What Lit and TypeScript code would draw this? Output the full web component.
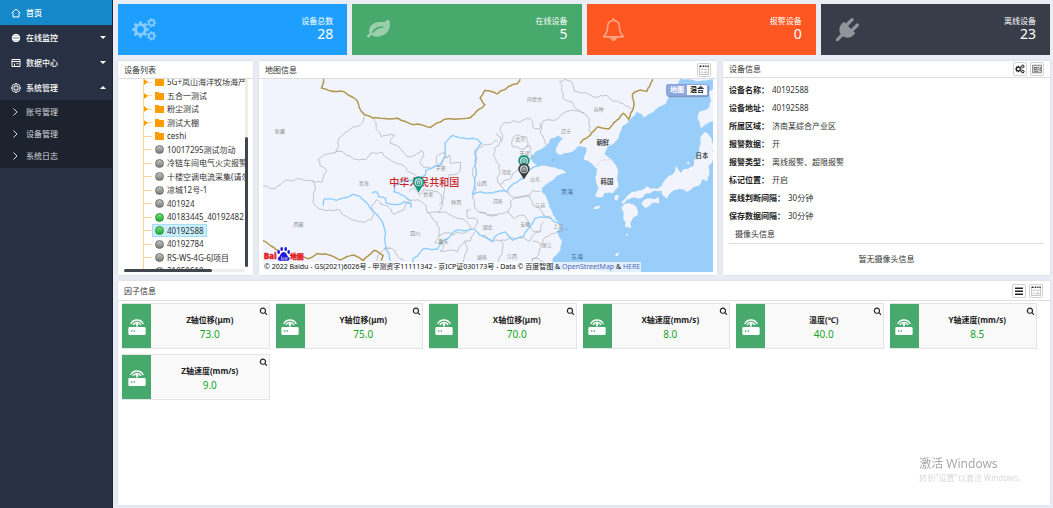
import { LitElement, html, svg, css, nothing } from "lit";
import { customElement } from "lit/decorators.js";
import { classMap } from "lit/directives/class-map.js";

/* ---------- icon helpers ---------- */

const gear = (cx: number, cy: number, r: number, hole: number, teeth = 8): string => {
  const inner = r * 0.76;
  const step = (Math.PI * 2) / teeth;
  const pt = (rad: number, a: number) =>
    `${(cx + rad * Math.cos(a)).toFixed(2)} ${(cy + rad * Math.sin(a)).toFixed(2)}`;
  let d = "";
  for (let i = 0; i < teeth; i++) {
    const a = i * step;
    d += `${i ? "L" : "M"}${pt(inner, a - step * 0.3)}L${pt(r, a - step * 0.2)}L${pt(r, a + step * 0.2)}L${pt(inner, a + step * 0.3)}`;
  }
  return `${d}ZM${cx + hole} ${cy}A${hole} ${hole} 0 1 0 ${cx - hole} ${cy}A${hole} ${hole} 0 1 0 ${cx + hole} ${cy}Z`;
};

const cogs = svg`<svg class="ico" viewBox="0 0 74 68" aria-hidden="true"><path fill-rule="evenodd" d="${
  gear(25, 34, 25, 10) + gear(58, 14, 14, 5.5, 7) + gear(58, 53, 14, 5.5, 7)
}"/></svg>`;

const fa = (d: string) =>
  svg`<svg class="ico" viewBox="0 0 1792 1792" aria-hidden="true"><path d=${d} /></svg>`;

const leaf = fa(
  "M1280 704q0-26-19-45t-45-19q-172 0-318 49.5t-259.5 134-235.5 219.5q-19 21-19 45 0 26 19 45t45 19q24 0 45-19 27-24 74-71t67-66q137-124 268.5-176t313.5-52q26 0 45-19t19-45zm512-198q0 95-20 193-46 224-184.5 383t-357.5 268q-214 108-438 108-148 0-286-47-15-5-88-42t-96-37q-16 0-39.5 32t-45 70-52.5 70-60 32q-43 0-63.5-17.5t-45.5-59.5q-2-4-6-11t-5.5-10-3-9.5-1.5-13.5q0-35 31-73.5t68-65.5 68-56 31-48q0-4-14-38t-16-44q-9-51-9-104 0-115 43.5-220t119-184.5 170.5-139 204-95.5q55-18 145-25.5t179.5-9 178.5-6 163.5-24 113.5-56.5l29.5-29.5 29.5-28 27-20 36.5-16 43.5-4.5q39 0 70.5 46t47.5 112 24 124 8 96z"
);
const bell = fa(
  "M912 1696q0-16-16-16-59 0-101.5-42.5t-42.5-101.5q0-16-16-16t-16 16q0 73 51.5 124.5t124.5 51.5q16 0 16-16zm-666-288h1300q-266-300-266-832 0-51-24-105t-69-103-121.5-80.5-169.5-31.5-169.5 31.5-121.5 80.5-69 103-24 105q0 532-266 832zm1482 0q0 52-38 90t-90 38h-448q0 106-75 181t-181 75-181-75-75-181h-448q-52 0-90-38t-38-90q50-42 91-88t85-119.5 74.5-158.5 50-206 19.5-260q0-152 117-282.5t307-158.5q-8-19-8-39 0-40 28-68t68-28 68 28 28 68q0 20-8 39 190 28 307 158.5t117 282.5q0 139 19.5 260t50 206 74.5 158.5 85 119.5 91 88z"
);
const plug = fa(
  "M1755 453q37 38 37 90.5t-37 90.5l-401 400 150 150-160 160q-163 163-389.5 186.5t-411.5-100.5l-362 362h-181v-181l362-362q-124-185-100.5-411.5t186.5-389.5l160-160 150 150 400-401q38-37 91-37t90 37 37 90.5-37 90.5l-400 401 234 234 401-400q38-37 91-37t90 37z"
);
const search = fa(
  "M1216 832q0-185-131.5-316.5t-316.5-131.5-316.5 131.5-131.5 316.5 131.5 316.5 316.5 131.5 316.5-131.5 131.5-316.5zm512 832q0 52-38 90t-90 38q-54 0-90-38l-343-342q-179 124-399 124-143 0-273.5-55.5t-225-150-150-225-55.5-273.5 55.5-273.5 150-225 225-150 273.5-55.5 273.5 55.5 225 150 150 225 55.5 273.5q0 220-124 399l343 343q37 37 37 90z"
);

const home = svg`<svg class="ico line" viewBox="0 0 20 20" aria-hidden="true"><path d="M1.5 10L10 2l8.500 8M4 9v9h12V9"/></svg>`;
const globe = svg`<svg class="ico line" viewBox="0 0 20 20" aria-hidden="true"><circle cx="10" cy="10" r="7.500" fill="currentColor" fill-opacity=".35"/><ellipse cx="10" cy="10" rx="4" ry="7.500"/><path d="M3 7h14M3 13h14M10 2v16"/></svg>`;
const windowIcon = svg`<svg class="ico line" viewBox="0 0 20 20" aria-hidden="true"><path d="M2 3h16v14H2zM2 7h16M7 11v6M11 11.500h4"/></svg>`;
const setting = svg`<svg class="ico line" viewBox="0 0 20 20" aria-hidden="true"><path d=${gear(10, 10, 9, 4)} /></svg>`;
const bars = svg`<svg class="ico" viewBox="0 0 20 20" aria-hidden="true"><path d="M2 3h16v3H2zM2 9h16v3H2zM2 15h16v3H2z"/></svg>`;
const calendar = svg`<svg class="ico" viewBox="0 0 32 32" aria-hidden="true"><path d="M2 4v26h28V4" fill="none" stroke="#999" stroke-width="2"/><path d="M2 4h6M12 4h5M20 4h4M27 4h4" stroke="#222" stroke-width="5"/><path d="M6 13l3 3 5-6M17 14h9M7 23h5M15 23h12" fill="none" stroke="#888" stroke-width="2"/></svg>`;
const card = svg`<svg class="ico" viewBox="0 0 32 32" aria-hidden="true"><path d="M2 4h28v24H2z" fill="#eee" stroke="#777" stroke-width="3"/><path d="M7 11h7v7H7zM17 11h5M26 10v13M6 23h15M17 17h5" fill="none" stroke="#555" stroke-width="3"/></svg>`;
const router = svg`<svg class="ico" viewBox="0 0 52 54" aria-hidden="true"><g fill="none" stroke="currentColor" stroke-width="4"><path d="M7 21a21 21 0 0 1 38 0M14 24a13 13 0 0 1 24 0"/><path d="M26 22v10" stroke-width="3"/></g><circle cx="26" cy="22" r="4"/><path fill-rule="evenodd" d="M4 30h44q4 0 4 4v16q0 4-4 4H4q-4 0-4-4V34q0-4 4-4zM8 40v4h4v-4zM16 40v4h4v-4z"/></svg>`;

/* ---------- map drawing ---------- */

type Pt = [number, number];

/* Breaks a polyline into short wobbling segments so it reads as a natural border. */
const rough = (coords: string, amp = 0.16, closed = false): string => {
  let seed = coords.length * 7 + 13;
  const rnd = () => {
    seed = (seed * 16807) % 2147483647;
    return seed / 2147483647 - 0.5;
  };
  let pts: Pt[] = coords.split(" ").map((p) => p.split(",").map(Number) as Pt);
  if (closed) pts.push(pts[0]);
  for (let k = 0; k < 3; k++) {
    const next: Pt[] = [pts[0]];
    for (let i = 1; i < pts.length; i++) {
      const [ax, ay] = pts[i - 1];
      const [bx, by] = pts[i];
      const len = Math.hypot(bx - ax, by - ay);
      if (len > 9) {
        const o = rnd() * 2 * amp;
        next.push([(ax + bx) / 2 - (by - ay) * o, (ay + by) / 2 + (bx - ax) * o]);
      }
      next.push([bx, by]);
    }
    pts = next;
  }
  return "M" + pts.map((p) => `${p[0].toFixed(1)} ${p[1].toFixed(1)}`).join("L") + (closed ? "Z" : "");
};

const provincesWest = [
  "15,382 40,390 70,380 85,366 120,362 165,366 175,372 195,372 208,335 190,322 183,303 232,284 242,250 275,218 310,200 322,176",
  "344,176 356,212 372,236 412,230 400,256 430,272 450,295 492,276 500,290 488,312 500,328 520,330",
  "232,284 262,284 290,302 325,304 340,285 378,285 400,305 440,322 452,340 476,352",
  "166,368 172,400 168,430 182,448 210,456 250,456 275,478 322,492 345,480 352,462",
  "352,462 346,438 358,424 390,442 410,468 440,454 452,430 480,424 505,440 510,462 545,462",
  "455,400 470,390 486,410 500,392 540,400 556,430 540,462",
  "520,330 545,326 560,300 575,290 580,316 610,312 602,345 575,350 560,380 560,420 545,440",
  "545,462 580,470 600,480 630,492 640,512",
  "655,290 645,330 652,370 645,412 650,440 664,460 690,470 720,470",
  "640,512 600,520 590,530 545,530 532,552 560,560 548,578 600,580 622,548 640,546 650,520",
  "400,568 420,590 440,606",
  "622,548 620,600 628,640",
  "640,452 628,455 632,480 660,484 650,510",
  "545,326 538,295 560,282 570,300",
  "655,290 680,258 720,248",
  "360,606 372,580 400,568 380,570",
  "510,462 545,530",
];
const provincesEast = [
  "50,225 65,250 62,210 72,195 100,188 120,192 145,180 158,188 160,208 180,212 188,190 215,186 240,175 265,160 300,158 312,165",
  "312,165 330,205 332,230",
  "240,70 245,95 250,120 275,130 285,148 312,165",
  "240,70 270,68 285,100 320,105 345,118 380,112 400,130 445,145 455,152",
  "100,240 118,230 140,236 146,255 134,272 118,270 98,265 102,240",
  "134,272 150,262 152,285 164,300",
  "180,195 182,225 195,245 200,262",
  "62,250 45,270 50,310 60,320 52,360 62,380 80,400",
  "62,380 90,362 100,345 120,330 158,300",
  "80,400 92,412 150,410 160,395 182,400",
  "92,430 85,460 105,480 130,470 148,500 162,520 182,520",
  "92,430 115,418 150,412 160,440 180,450 190,470 215,478",
  "0,462 30,472 70,465 85,460",
  "105,540 150,548 160,530 182,520 190,490",
  "60,640 58,600 70,570 65,545 105,540",
  "160,548 185,560 175,590 158,600 160,640",
  "185,560 215,525 235,520",
  "0,530 35,548 65,545",
  "158,600 190,610 210,625",
];
const riversWest = [
  "200,442 202,422 240,426 265,418 285,408 310,416 335,440 355,464 378,496 384,520 386,570 400,606",
  "345,404 358,400 365,415 385,418 388,434 425,438 442,430 462,435 460,448",
  "412,382 410,400 440,412 462,428",
  "412,382 455,366 480,362 504,350 505,336 550,318 565,290 562,255 586,232 630,242 660,243 672,255 652,282 655,330 652,370 645,410",
  "645,410 668,400 706,404",
  "490,580 500,570 540,572 570,540 600,514 650,512 668,530 706,550",
  "490,580 468,600 470,640",
];
const riversEast = [
  "40,404 82,400 92,385 130,360 140,345 178,322",
  "40,550 52,530 75,520 100,545 130,535 165,480 200,476 225,490 250,497",
];
const goldWest = [
  "200,63 194,90 215,97 260,100 300,128 322,170 420,180 520,208 560,184 640,178 682,140 668,120 682,97 720,108",
  "15,545 40,560 75,582 110,590 155,600 180,585 225,592 250,604 292,590 320,605 352,575 378,590 372,606",
];
const goldEast = [
  "54,108 80,92 98,80 112,78 122,64",
  "300,255 322,238 355,206 388,212 400,196 430,166 446,184 460,150 458,108 482,96 500,100 518,64",
];
const sea =
  "600,63 570,98 556,138 520,162 492,178 470,160 450,184 426,206 416,240 388,262 374,288 398,308 414,345 416,385 400,404 374,404 368,416 345,414 356,388 346,358 350,330 330,312 312,304 320,280 318,266 295,264 265,284 240,290 228,280 250,240 236,232 214,240 200,262 165,284 150,298 160,312 176,326 200,322 248,334 260,344 232,352 215,368 190,385 186,400 206,432 215,455 235,490 246,502 232,520 246,545 242,575 220,598 206,640 703,640 703,63";
const islands = [
  "703,84 686,100 692,130 682,152 658,160 652,182 664,210 680,198 703,186 714,140",
  "672,222 690,236 703,262 700,300 684,326 682,368 668,362 656,382 640,386 622,400 598,392 578,398 560,422 544,396 520,398 496,406 480,420 456,418 430,436 424,432 456,400 476,396 500,384 545,384 576,350 590,322 600,344 640,322 656,290 660,240",
  "484,438 506,420 534,416 538,434 514,436 494,448",
  "424,446 448,434 470,446 474,468 452,490 454,508 436,506 430,480 432,466",
  "342,448 358,442 360,448 344,452",
  "404,414 416,410 412,426 404,424",
  "620,316 626,308 628,318",
  "404,592 420,580 414,592",
  "438,526 446,528 440,532",
];

const label = (t: string, x: number, y: number, cls = "prov") =>
  svg`<text class=${cls} x=${x} y=${y}>${t}</text>`;

const pin = (x: number, y: number, color: string) => svg`
  <g transform="translate(${x} ${y})">
    <path d="M0 30L-12 11A17 17 0 1 1 12 11Z" fill=${color} />
    <circle r="12" fill="#d5dfe0" fill-opacity=".9" />
    <path d="M-6 7V-3L0-8L6-3V7ZM0-2V5" fill="none" stroke=${color} stroke-width="2.500" />
  </g>`;

const mapDrawing = svg`
<svg class="canvas" viewBox="15 63 1353 577" preserveAspectRatio="xMidYMid slice" role="img" aria-label="地图">
  <rect x="0" y="0" width="1400" height="700" fill="#f1f4fc" />
  <g transform="translate(666 0)">
    <path d=${rough(sea, 0.1, true)} fill="#9acefa" />
    ${islands.map((p) => svg`<path d=${rough(p, 0.16, true)} fill="#f1f4fc" />`)}
    <g class="border">${provincesEast.map((p) => svg`<path d=${rough(p)} />`)}</g>
    <g class="river">${riversEast.map((p) => svg`<path d=${rough(p, 0.1)} />`)}</g>
    <g class="gold">${goldEast.map((p) => svg`<path d=${rough(p, 0.1)} />`)}</g>
    <path d="M350 322L365 306L392 304" fill="none" stroke="#e8b0a8" stroke-width="2" stroke-dasharray="6 4" />
    <path d="M216 306L226 303M232 520L266 511" stroke="#8a97a8" stroke-width="1.500" />
  </g>
  <g class="border">${provincesWest.map((p) => svg`<path d=${rough(p)} />`)}</g>
  <g class="river">${riversWest.map((p) => svg`<path d=${rough(p, 0.1)} />`)}</g>
  <g class="gold">${goldWest.map((p) => svg`<path d=${rough(p, 0.08)} />`)}</g>
  ${label("新疆", 54, 225)}${label("青海", 305, 380)}${label("西藏", 110, 503)}
  ${label("四川", 459, 530)}${label("甘肃", 497, 412)}${label("宁夏", 535, 335)}
  ${label("陕西", 582, 438)}${label("山西", 658, 380)}${label("湖北", 675, 510)}
  ${label("重庆", 543, 553)}${label("湖南", 658, 602)}${label("内蒙古", 808, 128)}
  ${label("吉林", 1007, 159)}${label("辽宁", 910, 225)}${label("北京", 773, 248)}
  ${label("天津", 786, 290)}${label("河北", 731, 346)}${label("山东", 818, 368)}
  ${label("河南", 705, 435)}${label("江苏", 833, 445)}${label("安徽", 788, 501)}
  ${label("上海", 886, 509)}${label("浙江", 852, 566)}${label("江西", 748, 599)}
  ${label("黄海", 910, 407, "ocean")}${label("东海", 940, 600, "ocean")}
  ${label("朝鲜", 1016, 259, "nation")}${label("韩国", 1028, 377, "nation")}${label("日本", 1312, 298, "nation")}
  ${label("中华人民共和国", 396, 382, "china")}
  ${pin(484, 372, "#0f9580")}${pin(799, 308, "#0f9580")}${pin(799, 333, "#3c3c3f")}
</svg>`;

const baiduLogo = svg`
<svg class="baidu" viewBox="0 0 126 48" aria-label="百度地图">
  <g class="logo-text"><text x="2" y="38" font-size="24">Bai</text><text x="82" y="38" font-size="20">地图</text></g>
  <g stroke="#fff" stroke-width="8"><circle cx="62" cy="28" r="14" fill="#fff"/></g>
  <g fill="#2319dc">
    <path d="M62 18q7 0 10 8t7 9q3 10-8 9h-18q-11 1-8-9 4-2 7-9t10-8z"/>
    <ellipse cx="47" cy="18" rx="4" ry="6"/><ellipse cx="56" cy="9" rx="4" ry="6"/>
    <ellipse cx="68" cy="9" rx="4" ry="6"/><ellipse cx="77" cy="18" rx="4" ry="6"/>
  </g>
  <path d="M56 31v9h5v-5M66 33v7h6v-7" fill="none" stroke="#fff" stroke-width="2"/>
</svg>`;

/* ---------- data ---------- */

const menu = [
  { text: "首页", icon: home, active: true, arrow: "" },
  { text: "在线监控", icon: globe, active: false, arrow: "down" },
  { text: "数据中心", icon: windowIcon, active: false, arrow: "down" },
  { text: "系统管理", icon: setting, active: false, arrow: "up" },
];
const subMenu = ["账号管理", "设备管理", "系统日志"];
const stats = [
  { name: "设备总数", value: 28, icon: cogs, tone: "blue" },
  { name: "在线设备", value: 5, icon: leaf, tone: "green" },
  { name: "报警设备", value: 0, icon: bell, tone: "orange" },
  { name: "离线设备", value: 23, icon: plug, tone: "dark" },
];
const tree = [
  { text: "5G+岚山海洋牧场海产", kind: "folder", open: true },
  { text: "五合一测试", kind: "folder", open: true },
  { text: "粉尘测试", kind: "folder", open: true },
  { text: "测试大棚", kind: "folder", open: true },
  { text: "ceshi", kind: "folder" },
  { text: "10017295测试勿动", kind: "off" },
  { text: "冷链车间电气火灾报警", kind: "off" },
  { text: "十楼空调电流采集(请勿", kind: "off" },
  { text: "凉城12号-1", kind: "off" },
  { text: "401924", kind: "off" },
  { text: "40183445_40192482", kind: "on" },
  { text: "40192588", kind: "on", selected: true },
  { text: "40192784", kind: "off" },
  { text: "RS-WS-4G-6J项目", kind: "off" },
  { text: "21050610", kind: "off" },
];
const details = [
  ["设备名称：", "40192588"],
  ["设备地址：", "40192588"],
  ["所属区域：", "济南某综合产业区"],
  ["报警数据：", "开"],
  ["报警类型：", "离线报警、超限报警"],
  ["标记位置：", "开启"],
  ["离线判断间隔：", "30分钟"],
  ["保存数据间隔：", "30分钟"],
];
const factors = [
  ["Z轴位移(μm)", "73.0"],
  ["Y轴位移(μm)", "75.0"],
  ["X轴位移(μm)", "70.0"],
  ["X轴速度(mm/s)", "8.0"],
  ["温度(℃)", "40.0"],
  ["Y轴速度(mm/s)", "8.5"],
  ["Z轴速度(mm/s)", "9.0"],
];

@customElement("app-root")
export class AppRoot extends LitElement {
  static styles = css`
    :host {
      display: grid;
      grid-template-columns: 113px minmax(0, 1fr);
      min-height: 100vh;
      background: #ebedf5;
      color: #333;
      font: 8px/12px "Noto Sans", "Noto Sans CJK SC", sans-serif;
    }
    * { box-sizing: border-box; }
    ul, dl, dd, h2, h3, p { margin: 0; padding: 0; list-style: none; font-size: inherit; font-weight: inherit; }
    a { color: inherit; text-decoration: none; }
    button { margin: 0; padding: 0; font: inherit; color: inherit; cursor: pointer; border: 0; background: none; }
    .ico { display: block; fill: currentColor; }
    .line { fill: none; stroke: currentColor; stroke-width: 2; }

    .side { background: #283043; border-right: 1px solid #1b2236; color: #fff; }
    .item { display: flex; align-items: center; gap: 5px; height: 25px; padding: 0 6px 0 11px; font-weight: 500; }
    .item .ico { width: 10px; height: 10px; }
    .item.active { background: #1689ca; }
    .item .arrow { margin-left: auto; border: 3px solid transparent; border-bottom: 0; border-top-color: #fff; }
    .item .arrow.up { border: 3px solid transparent; border-top: 0; border-bottom-color: #fff; }
    .sub { padding: 1px 0; background: #1d222f; color: #d5d7dc; }
    .sub a { display: flex; align-items: center; gap: 8px; height: 22px; padding: 0 0 0 13px; }
    .sub svg { width: 5px; height: 8px; }

    .main { display: flex; flex-direction: column; gap: 6px; padding: 4px 3px 3px 5px; min-width: 0; }
    .stats { display: grid; grid-template-columns: repeat(4, minmax(0, 1fr)); gap: 5px; }
    .stat { display: flex; align-items: center; justify-content: space-between; height: 51px; padding: 0 14px; color: #fff; }
    .stat .ico { width: 25px; height: 23px; opacity: .45; }
    .stat .nums { padding-bottom: 4px; text-align: right; }
    .stat .num { display: block; font-size: 14px; line-height: 14px; }
    .blue { background: #1e9fff; }
    .green { background: #47a96c; }
    .orange { background: #ff5722; }
    .dark { background: #393d49; }

    .row { display: grid; grid-template-columns: 135fr 458fr 327fr; grid-template-rows: minmax(0, 1fr); gap: 6px; height: 214px; }
    .panel { display: flex; flex-direction: column; background: #fff; min-width: 0; box-shadow: 0 0 3px #d3d5de; }
    .head { display: flex; align-items: center; flex: none; height: 18px; padding: 0 6px; border-bottom: 1px solid #ddd; }
    .head h2 { flex: 1; }
    .tool { display: grid; place-items: center; width: 14px; height: 14px; border: 1px solid #d2d2d2; border-radius: 2px; background: #fff; color: #222; margin-left: 3px; }
    .tool .ico { width: 10px; height: 10px; }

    .tree { position: relative; flex: 1; min-height: 0; overflow: hidden; margin: 0 5px 3px 6px; }
    .tree ul { margin: -4px 3px 0 19px; border-left: 1px solid #ffd591; }
    .tree li { display: flex; align-items: center; height: 14px; white-space: nowrap; }
    .tree li:nth-child(even) { height: 13px; }
    .tick { flex: none; width: 8px; height: 1px; background: #ffd591; }
    .tick.open { height: 6px; background: linear-gradient(#ffd591, #ffd591) 0 50% / 100% 1px no-repeat; }
    .tick.open::before { content: ""; display: block; width: 0; border: 3px solid transparent; border-left: 4px solid #ff9c00; border-right: 0; }
    .node { display: flex; align-items: center; gap: 3px; height: 13px; padding: 0 2px; border: 1px solid transparent; }
    .node.selected { background: #c8efff; border-color: #a5ddf2; }
    .mark { width: 9px; height: 9px; border-radius: 50%; border: 1px solid #6e6e6e; background: linear-gradient(#c4c4c4, #7c7c7c); }
    .mark.on { border-color: #2a8f35; background: linear-gradient(#76e07d, #1fae30); }
    .mark.folder { height: 8px; border: 0; border-radius: 0; background: linear-gradient(#fff, #fff) 100% 0 / 5px 1px no-repeat, #ff9c00; }
    .vbar, .hbar { position: absolute; background: #eee; border-radius: 2px; }
    .vbar { top: 0; right: 0; bottom: 5px; width: 3px; }
    .hbar { left: 0; right: 3px; bottom: 0; height: 3px; }
    .vbar::before, .hbar::before { content: ""; position: absolute; background: #41454e; border-radius: 2px; }
    .vbar::before { inset: 31% 0 0 0; }
    .hbar::before { inset: 0 27% 0 0; }

    .map { position: relative; flex: 1; margin: 0 4px 3px 4px; overflow: hidden; min-height: 0; }
    .canvas { position: absolute; inset: 0; width: 100%; height: 100%; }
    .border path { fill: none; stroke: #a9abb0; stroke-width: 2; }
    .river path { fill: none; stroke: #8accff; stroke-width: 4; }
    .gold path { fill: none; stroke: #b1964f; stroke-width: 4.5; }
    .prov { font-size: 15px; fill: #8b8b8b; }
    .ocean { font-size: 18px; fill: #4b73a5; }
    .nation { font-size: 19px; fill: #222; font-weight: 500; }
    .china { font-size: 30px; fill: #c62329; font-weight: 500; }
    .types { position: absolute; top: 5px; right: 5px; display: flex; border: 1px solid #8ba4dc; background: #fff; box-shadow: 1px 1px 1px #7b8fb5; border-radius: 2px; font-size: 7px; line-height: 10px; font-weight: 700; color: #111; }
    .types button { padding: 0 3px; }
    .types .picked { background: #8ea8e0; color: #fff; }
    .foot { position: absolute; left: 0; bottom: 0; }
    .baidu { display: block; width: 42px; height: 16px; }
    .logo-text { fill: #e01f26; stroke: #e01f26; stroke-width: 1; font-weight: 900; }
    .copy { padding: 0 1px; background: rgba(255, 255, 255, .7); font-size: 7px; line-height: 10px; color: #111; white-space: nowrap; }
    .copy a { color: #5568b8; }

    .info .head { height: 17px; }
    .factors .head { padding-right: 7px; }
    .body { padding: 3px 6px; }
    .body dl > div { display: flex; gap: 3px; line-height: 18px; }
    dt { font-weight: 700; color: #222; }
    .cam { padding: 0 6px; line-height: 18px; border-bottom: 1px solid #ddd; }
    .none { padding-top: 9px; text-align: center; }

    .factors { flex: 1; }
    .factors .head { height: 20px; }
    .grid { display: grid; grid-template-columns: repeat(6, minmax(0, 1fr)); gap: 5px 6px; padding: 2px 13px 3px 4px; }
    .factor { position: relative; display: flex; height: 46px; background: #f9f9f9; border: 1px solid #e4e4e4; border-left: 0; }
    .badge { display: grid; place-items: center; flex: none; width: 29px; background: #47a96c; color: #fff; }
    .badge .ico { width: 18px; height: 18px; }
    .data { flex: 1; padding-top: 10px; text-align: center; }
    .data h3 { font-weight: 700; color: #222; }
    .data p { font-size: 10px; line-height: 16px; color: #16a52b; }
    .look { position: absolute; top: 3px; right: 1px; color: #222; }
    .look .ico { width: 9px; height: 8px; }

    .activate { position: fixed; right: 27px; bottom: 24px; color: #a9a9a9; pointer-events: none; }
    .activate p { font-size: 12px; line-height: 16px; }
    .activate small { display: block; font-size: 8px; line-height: 12px; color: #d8d8d8; }
  `;

  render() {
    return html`
      <nav class="side">
        ${menu.map(
          (m) => html`<a href="#" class=${classMap({ item: true, active: m.active })}>
            ${m.icon}<span>${m.text}</span>
            ${m.arrow ? html`<i class="arrow ${m.arrow}"></i>` : nothing}
          </a>`
        )}
        <div class="sub">
          ${subMenu.map(
            (t) => html`<a href="#"><svg class="line" viewBox="0 0 10 16" aria-hidden="true"><path d="M1 1l7 7-7 7" /></svg><span>${t}</span></a>`
          )}
        </div>
      </nav>

      <main class="main">
        <section class="stats">
          ${stats.map(
            (s) => html`<div class="stat ${s.tone}">${s.icon}<div class="nums">${s.name}<span class="num">${s.value}</span></div></div>`
          )}
        </section>

        <div class="row">
          <section class="panel">
            <header class="head"><h2>设备列表</h2></header>
            <div class="tree">
              <ul>
                ${tree.map(
                  (n) => html`<li>
                    <i class=${classMap({ tick: true, open: !!n.open })}></i>
                    <span class=${classMap({ node: true, selected: !!n.selected })}><i class="mark ${n.kind}"></i>${n.text}</span>
                  </li>`
                )}
              </ul>
              <div class="vbar"></div>
              <div class="hbar"></div>
            </div>
          </section>

          <section class="panel">
            <header class="head"><h2>地图信息</h2><button class="tool" aria-label="列表">${calendar}</button></header>
            <div class="map">
              ${mapDrawing}
              <div class="types"><button class="picked">地图</button><button>混合</button></div>
              <div class="foot">
                ${baiduLogo}
                <div class="copy">© 2022 Baidu - GS(2021)6026号 - 甲测资字11111342 - 京ICP证030173号 - Data © 百度智图 &amp; <a href="#">OpenStreetMap</a> &amp; <a href="#">HERE</a></div>
              </div>
            </div>
          </section>

          <section class="panel info">
            <header class="head">
              <h2>设备信息</h2>
              <button class="tool" aria-label="设置">${cogs}</button>
              <button class="tool" aria-label="卡片">${card}</button>
            </header>
            <div class="body">
              <dl>${details.map(([k, v]) => html`<div><dt>${k}</dt><dd>${v}</dd></div>`)}</dl>
              <h3 class="cam">摄像头信息</h3>
              <p class="none">暂无摄像头信息</p>
            </div>
          </section>
        </div>

        <section class="panel factors">
          <header class="head">
            <h2>因子信息</h2>
            <button class="tool" aria-label="菜单">${bars}</button>
            <button class="tool" aria-label="列表">${calendar}</button>
          </header>
          <div class="grid">
            ${factors.map(
              ([name, value]) => html`<article class="factor">
                <div class="badge">${router}</div>
                <div class="data"><h3>${name}</h3><p>${value}</p></div>
                <button class="look" aria-label="查看">${search}</button>
              </article>`
            )}
          </div>
        </section>
      </main>

      <aside class="activate"><p>激活 Windows</p><small>转到"设置"以激活 Windows。</small></aside>
    `;
  }
}
